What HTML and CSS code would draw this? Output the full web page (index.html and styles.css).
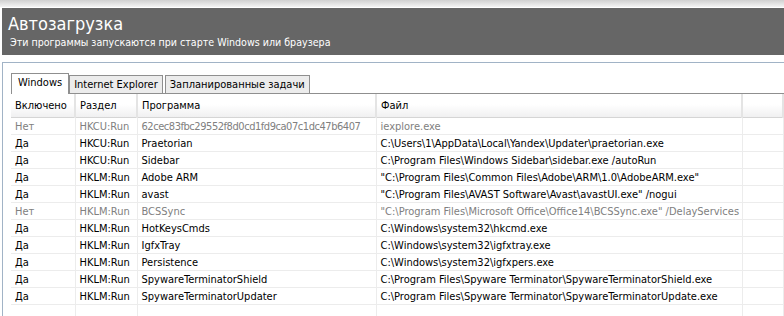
FILE: index.html
```html
<!DOCTYPE html>
<html lang="ru">
<head>
	<meta charset="UTF-8">
	<title>Автозагрузка</title>
	<link rel="stylesheet" href="styles.css">
</head>
<body>
<div class="topStrip"></div>
<div class="header">
	<h1>Автозагрузка</h1>
	<p>Эти программы запускаются при старте Windows или браузера</p>
</div>
<div class="panel">
	<ul class="tabs">
		<li class="active">Windows</li>
		<li>Internet Explorer</li>
		<li>Запланированные задачи</li>
	</ul>
	<table class="list">
		<colgroup>
			<col class="c1"><col class="c2"><col class="c3"><col class="c4"><col>
		</colgroup>
		<thead>
			<tr><th>Включено</th><th>Раздел</th><th>Программа</th><th>Файл</th><th></th></tr>
		</thead>
		<tbody>
			<tr class="off"><td>Нет</td><td>HKCU:Run</td><td class="hash">62cec83fbc29552f8d0cd1fd9ca07c1dc47b6407</td><td>iexplore.exe</td><td></td></tr>
			<tr><td>Да</td><td>HKCU:Run</td><td>Praetorian</td><td>C:\Users\1\AppData\Local\Yandex\Updater\praetorian.exe</td><td></td></tr>
			<tr><td>Да</td><td>HKCU:Run</td><td>Sidebar</td><td>C:\Program Files\Windows Sidebar\sidebar.exe /autoRun</td><td></td></tr>
			<tr><td>Да</td><td>HKLM:Run</td><td>Adobe ARM</td><td>"C:\Program Files\Common Files\Adobe\ARM\1.0\AdobeARM.exe"</td><td></td></tr>
			<tr><td>Да</td><td>HKLM:Run</td><td>avast</td><td>"C:\Program Files\AVAST Software\Avast\avastUI.exe" /nogui</td><td></td></tr>
			<tr class="off"><td>Нет</td><td>HKLM:Run</td><td>BCSSync</td><td>"C:\Program Files\Microsoft Office\Office14\BCSSync.exe" /DelayServices</td><td></td></tr>
			<tr><td>Да</td><td>HKLM:Run</td><td>HotKeysCmds</td><td>C:\Windows\system32\hkcmd.exe</td><td></td></tr>
			<tr><td>Да</td><td>HKLM:Run</td><td>IgfxTray</td><td>C:\Windows\system32\igfxtray.exe</td><td></td></tr>
			<tr><td>Да</td><td>HKLM:Run</td><td>Persistence</td><td>C:\Windows\system32\igfxpers.exe</td><td></td></tr>
			<tr><td>Да</td><td>HKLM:Run</td><td>SpywareTerminatorShield</td><td>C:\Program Files\Spyware Terminator\SpywareTerminatorShield.exe</td><td></td></tr>
			<tr><td>Да</td><td>HKLM:Run</td><td>SpywareTerminatorUpdater</td><td>C:\Program Files\Spyware Terminator\SpywareTerminatorUpdate.exe</td><td></td></tr>
			<tr class="empty"><td></td><td></td><td></td><td></td><td></td></tr>
		</tbody>
	</table>
</div>
</body>
</html>
```
FILE: styles.css
```css
html, body {
	margin:0;
	padding:0;
	background:#fff;
	overflow:hidden;
	font-family:"DejaVu Sans Condensed", "DejaVu Sans", sans-serif;
}

.topStrip {
	height:7px;
	background:linear-gradient(#d0d0d0, #f4f4f4);
	border-bottom:1px solid #fff;
}

.header {
	margin-left:2px;
	height:47px;
	background:#666;
	color:#fff;
	padding:0 6px;
	box-sizing:border-box;
}
.header h1 {
	margin:0;
	padding-top:5px;
	font-size:18px;
	font-weight:normal;
	line-height:22px;
}
.header p {
	margin:0;
	font-size:10.6px;
	line-height:14px;
	padding-left:2px;
}

.panel {
	margin:7px 0 0 2px;
	border-top:1px solid #a1b3c6;
	border-left:1px solid #a1b3c6;
	padding:9px 0 0 8px;
	font-size:11px;
}

.tabs {
	list-style:none;
	margin:0;
	padding:0;
	display:flex;
	align-items:flex-end;
	height:21px;
	border-bottom:1px solid #8f8f8f;
}
.tabs li {
	height:17px;
	line-height:17px;
	padding:0 4px;
	margin-right:2px;
	background:#ececec;
	border:1px solid #8f8f8f;
	border-bottom:none;
	color:#000;
}
.tabs li.active {
	height:20px;
	line-height:18px;
	background:#fff;
	margin-bottom:-1px;
	padding:0 6px;
	margin-right:0;
}

.list {
	border-collapse:collapse;
	table-layout:fixed;
	width:100%;
	color:#000;
}
.list .c1 { width:64px; }
.list .c2 { width:62px; }
.list .c3 { width:239px; }
.list .c4 { width:366px; }

.list th {
	height:23px;
	padding:0 0 0 4px;
	text-align:left;
	font-weight:normal;
	background:linear-gradient(#fff 45%, #f0f0f1);
	border-right:2px solid #e4e4e4;
	border-bottom:1px solid #d5d5d5;
	white-space:nowrap;
	overflow:hidden;
}
.list td {
	height:16px;
	padding:0 0 0 4px;
	border-right:1px solid #ececec;
	border-bottom:1px solid #ececec;
	white-space:nowrap;
	overflow:hidden;
}
.list td.hash {
	letter-spacing:-0.45px;
}
.list tr.off td {
	color:#808080;
}
```
